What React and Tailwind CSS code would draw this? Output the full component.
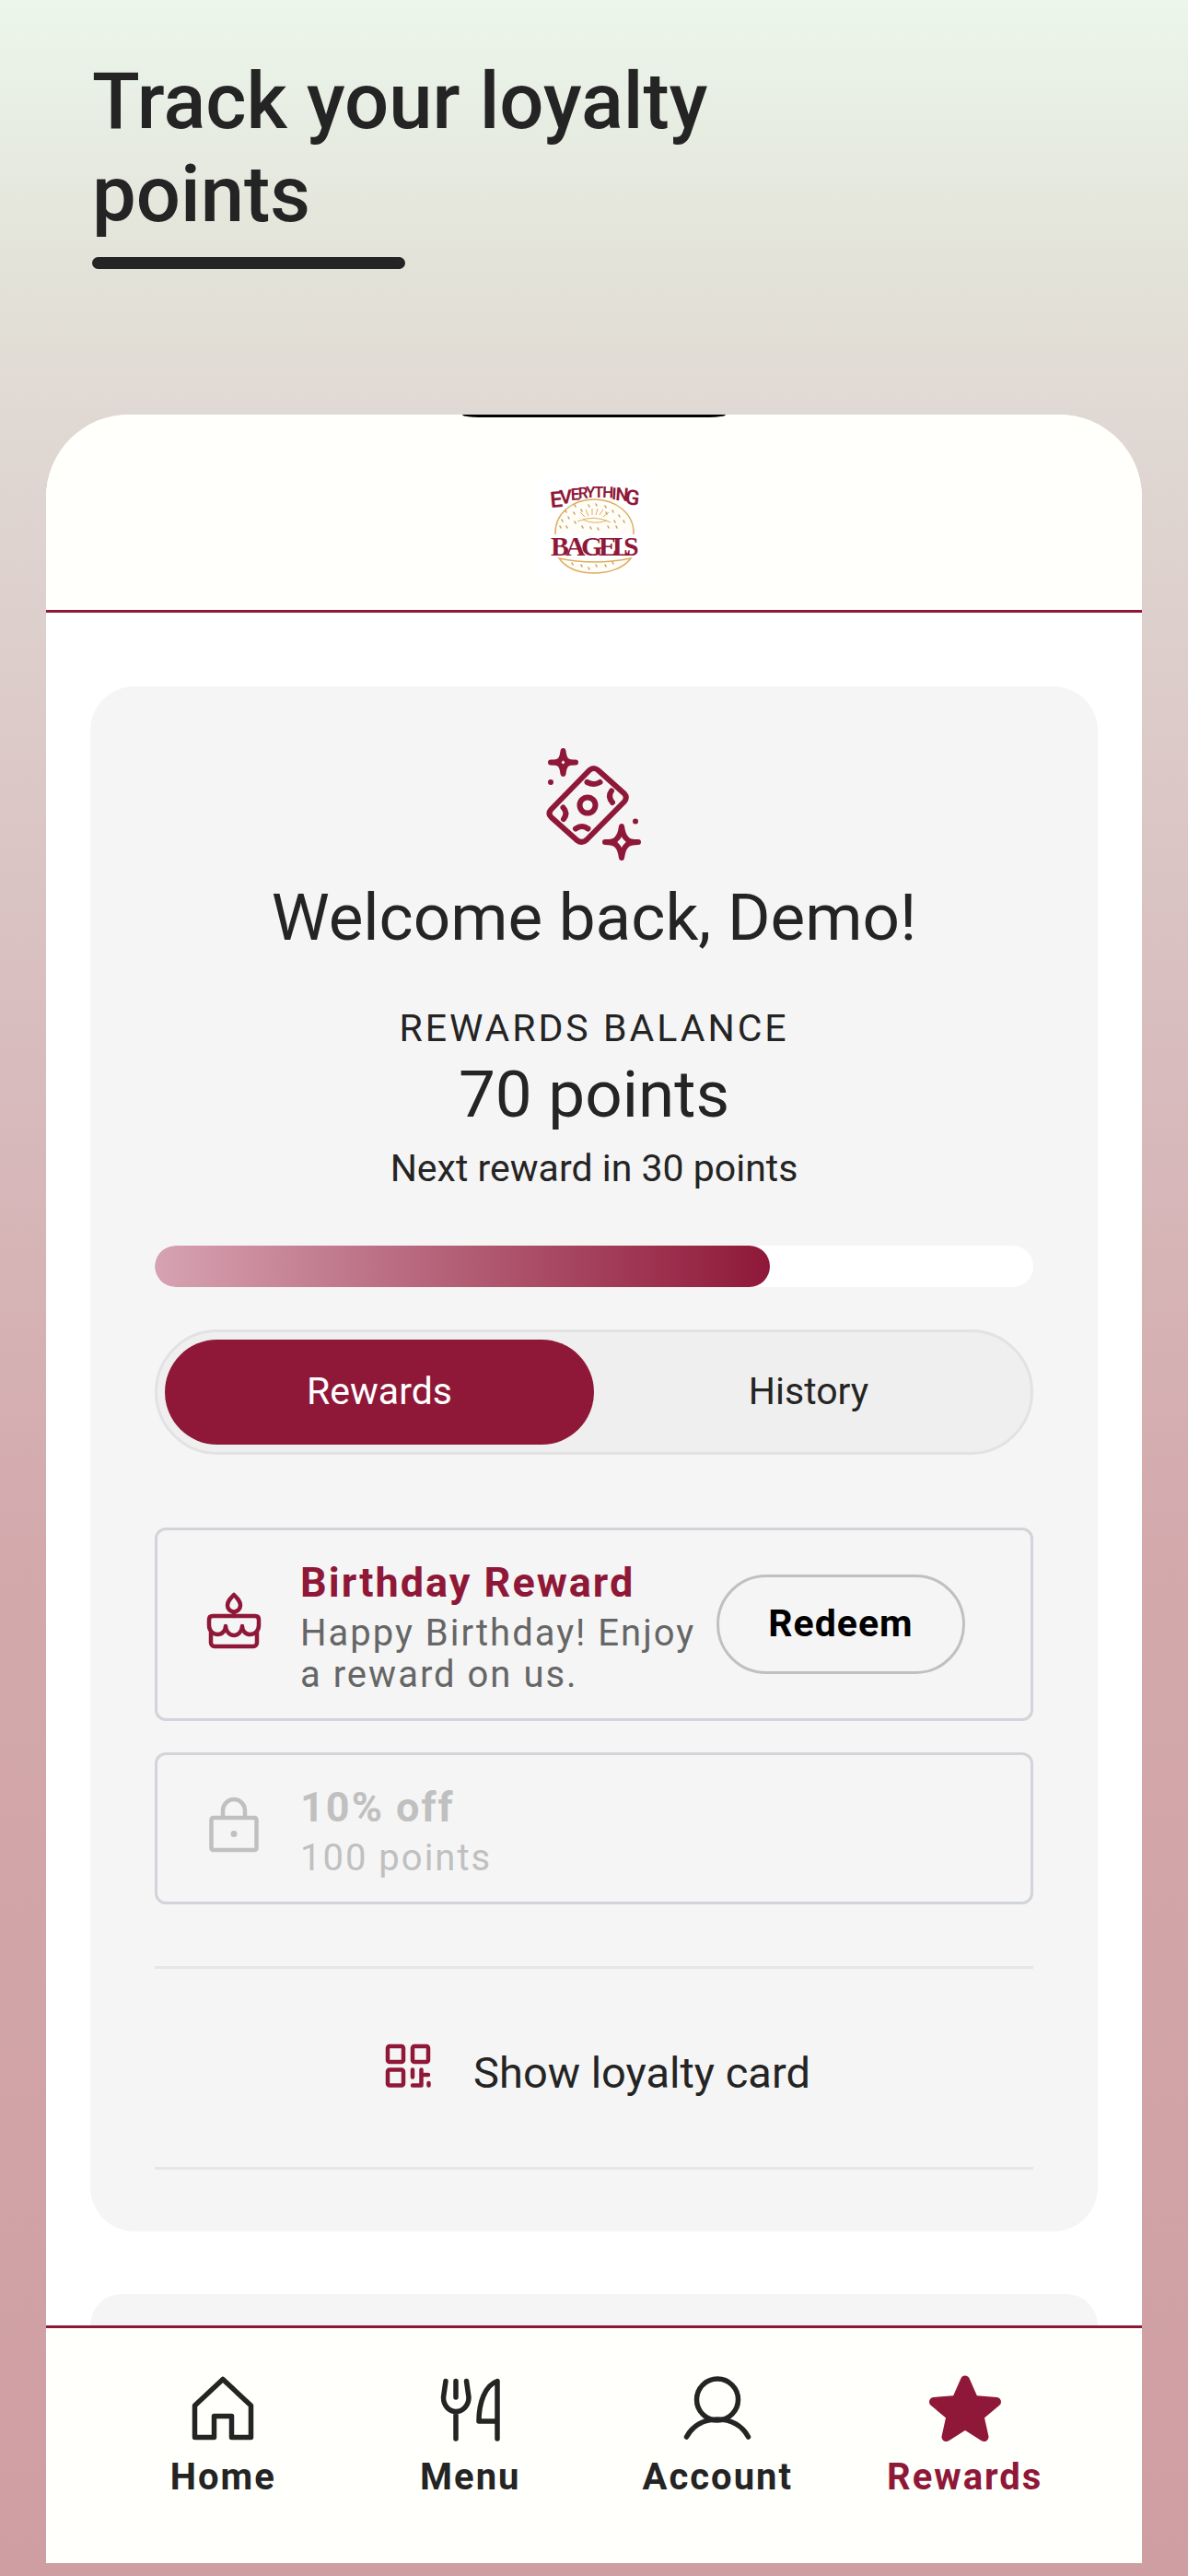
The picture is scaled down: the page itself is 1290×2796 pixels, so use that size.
import { useState } from 'react'

const NAV_ITEMS = [
  { key: 'home', label: 'Home', Icon: HomeIcon },
  { key: 'menu', label: 'Menu', Icon: MenuIcon },
  { key: 'account', label: 'Account', Icon: AccountIcon },
  { key: 'rewards', label: 'Rewards', Icon: StarIcon },
]

const REWARDS = [
  { key: 'birthday', title: 'Birthday Reward', text: 'Happy Birthday! Enjoy a reward on us.', Icon: CakeIcon, redeemable: true },
  { key: 'ten', title: '10% off', text: '100 points', Icon: LockIcon, redeemable: false },
]

// ─── Icons ───────────────────────────────────────────────────────────────────

function HomeIcon() {
  return (
    <svg width="80" height="80" viewBox="0 0 80 80" fill="none" stroke="currentColor" strokeWidth="5.500" strokeLinecap="round" strokeLinejoin="round">
      <path d="M40 9.500 9.500 38v34.500h21V49.500h19v23h21V38z" />
    </svg>
  )
}

function MenuIcon() {
  return (
    <svg width="80" height="80" viewBox="0 0 80 80" fill="none" stroke="currentColor" strokeWidth="5.500" strokeLinecap="round" strokeLinejoin="round">
      <path d="M13 11.500 10.500 29c0 9 6 15.500 13.500 15.500S38 38 38 29l-2.500-17.500M24 11.500V29M24 45v29M69 74V11.500C56 16 49 34 49 55h20" />
    </svg>
  )
}

function AccountIcon() {
  return (
    <svg width="80" height="80" viewBox="0 0 80 80" fill="none" stroke="currentColor" strokeWidth="5.500" strokeLinecap="round" strokeLinejoin="round">
      <circle cx="40" cy="31.500" r="22.500" />
      <path d="M6.500 72C13 60 25 53 40 53s27 7 33.500 19" />
    </svg>
  )
}

function StarIcon() {
  return (
    <svg width="80" height="80" viewBox="0 0 80 80" fill="currentColor" stroke="currentColor" strokeWidth="10" strokeLinejoin="round">
      <path d="M40 10.500 49.500 32 74 34 55.500 49.500 60.500 72 40 59 19.500 72 24.500 49.500 6 34 30.500 32z" />
    </svg>
  )
}

function CakeIcon() {
  return (
    <svg width="60" height="70" viewBox="0 0 60 70" fill="none" stroke="currentColor" strokeWidth="4.500" strokeLinecap="round" strokeLinejoin="round">
      <path d="M30 3c-4 4-7 7-7 11.500a7 7 0 0 0 14 0C37 10 34 7 30 3zM30 22v4" />
      <path d="M7 26h46c2.500 0 4 1.500 4 4v6c0 6-4 10-9.500 10-5 0-8.500-4-8.500-9 0 5-4 10-9 10s-9-5-9-10c0 5-4 9-8.500 9C7 46 3 42 3 36v-6c0-2.500 1.500-4 4-4zM5 44v11c0 2 1.500 4 4 4h42c2.500 0 4-2 4-4V44" />
    </svg>
  )
}

function LockIcon() {
  return (
    <svg width="60" height="70" viewBox="0 0 60 70" fill="none" stroke="currentColor" strokeWidth="4.500">
      <rect x="5.500" y="23" width="49" height="35" rx="2" />
      <path d="M18 23v-7.500a12 12.500 0 0 1 24 0v7.500" />
      <circle cx="30" cy="40.500" r="3.500" fill="currentColor" stroke="none" />
    </svg>
  )
}

function QrIcon() {
  return (
    <svg className="text-[#8f1838]" width="50" height="48" viewBox="0 0 50 48" fill="none" stroke="currentColor" strokeWidth="4.500" strokeLinecap="round" strokeLinejoin="round">
      <rect x="3" y="3" width="17" height="17" rx="2" />
      <rect x="30" y="3" width="17" height="17" rx="2" />
      <rect x="3" y="28.500" width="17" height="17" rx="2" />
      <path d="M30 28.500v8M30 45.500h9.500v-17M39.500 34H47M47.500 43v2.500" />
    </svg>
  )
}

function CashIcon() {
  return (
    <svg width="108" height="126" viewBox="0 0 108 126" fill="none" stroke="#8f1838" strokeWidth="6" strokeLinecap="round" strokeLinejoin="round">
      <path d="M49 26 7.500 68.500q-4 4.500 0 8.500l28 25q5.500 4 10.500-.500L87 60q3.500-4.500 0-8.500L58.500 26q-5-4-9.500 0z" />
      <circle cx="47" cy="64" r="8.500" />
      <path d="M46.500 39q7.500 4 14 0M73 48.500q-4.500 6 1 12.500M34 89.500q7-5 13.500 0M20.500 66.500q5.500 6 .500 12.500" />
      <path d="M20.500 5q1 8 3.500 10 2 2.500 10 2.500-8 0-10 2.500-2.500 2-3.500 10-1-8-3.500-10-2-2.500-10-2.500 8 0 10-2.500 2.500-2 3.500-10z" />
      <path d="M84 87q1.500 10 5 13 2.500 4 13 4-10.500 0-13 4-3.500 3-5 13-1.500-10-5-13-2.500-4-13-4 10.500 0 13-4 3.500-3 5-13z" />
      <circle cx="7" cy="39" r="3" fill="#8f1838" stroke="none" />
      <circle cx="99" cy="81.500" r="3" fill="#8f1838" stroke="none" />
    </svg>
  )
}

// ─── Logo ────────────────────────────────────────────────────────────────────

// letter, x, baseline, size, tilt
const TOP_LETTERS = [
  ['E', 15, 37, 24, -5],
  ['V', 25, 33, 21, -4],
  ['E', 37, 29, 18, -3],
  ['R', 45, 27, 17, -2],
  ['Y', 53, 26, 17, 0],
  ['T', 62, 26, 17, 0],
  ['H', 71, 26, 17, 2],
  ['I', 81, 28, 18, 3],
  ['N', 85, 29, 20, 4],
  ['G', 95, 33, 23, 7],
]

const SEEDS = [
  [31, 40], [41, 34], [48, 39], [56, 34], [64, 33], [74, 35], [82, 40], [89, 45], [94, 51],
  [34, 47], [27, 50], [32, 57], [25, 57], [41, 52], [49, 57], [58, 58], [66, 59], [77, 57],
  [84, 51], [75, 42], [86, 57], [40, 42], [38, 97], [48, 99], [56, 102], [64, 99], [74, 99], [82, 96],
]

function Logo() {
  return (
    <svg width="124" height="116" viewBox="0 0 124 116" role="img" aria-label="Everything Bagels">
      <rect width="124" height="116" fill="#ffffff" />
      <path d="M20 66c-1-22 18-38 42-38s44 16 43 38" fill="#fffdf8" stroke="#dfae5f" strokeWidth="1.500" />
      <path d="M24 92c8 11 22 16 38 16s32-5 40-16q-40 8-78 0z" fill="#fffdf8" stroke="#dfae5f" strokeWidth="1.500" />
      <path d="M44 52q18-8 36 1M50 50q12 6 26 1M52 47l-5-5M56 46l-3-7M60 45v-7M64 45l2-7M68 45l4-6M72 47l6-5" fill="none" stroke="#dfae5f" strokeWidth="1" />
      {SEEDS.map(([x, y]) => (
        <path key={`${x}-${y}`} d={`M${x} ${y}l1 2`} stroke="#c9a25a" strokeWidth="1.500" strokeLinecap="round" />
      ))}
      <g fill="#8f1838" fontFamily="Roboto, sans-serif" fontWeight="600">
        {TOP_LETTERS.map(([ch, x, y, size, turn], i) => (
          <text key={i} x={x} y={y} fontSize={size} transform={`rotate(${turn} ${x} ${y})`}>{ch}</text>
        ))}
      </g>
      <text
        x="15 31 48 67 82 94"
        y="89"
        fill="#8f1838"
        fontFamily="Liberation Serif, serif"
        fontWeight="700"
        fontSize="30"
      >
        BAGELS
      </text>
    </svg>
  )
}

// ─── Reward row ──────────────────────────────────────────────────────────────

function RewardRow({ title, text, Icon, redeemable }) {
  return (
    <li
      className={`flex items-center gap-4 rounded-xl border-3 border-[#d1d4d8] py-[25px] pr-[71px] pl-[53px] ${
        redeemable ? 'text-[#8f1838]' : 'text-[#c0c0c0]'
      }`}
    >
      <div className="w-[86px] shrink-0"><Icon /></div>
      <div className="min-w-0 flex-1">
        <h3 className="text-[45px] leading-[64px] font-bold tracking-[2px]">{title}</h3>
        <p className={`text-[40px] leading-[45px] tracking-[2px] ${redeemable ? 'text-[#666666]' : ''}`}>{text}</p>
      </div>
      {redeemable && (
        <button className="h-[108px] w-[270px] shrink-0 rounded-full border-3 border-[#c0c0c0] text-[41px] font-bold tracking-[1px] text-black">
          Redeem
        </button>
      )}
    </li>
  )
}

// ─── Main component ──────────────────────────────────────────────────────────

export default function App() {
  const [tab, setTab] = useState('rewards')
  const points = 70
  const goal = 100

  return (
    <div className="flex min-h-screen flex-col bg-linear-[to_bottom,#ecf6eb_0%,#e3e3d9_10%,#e0d9d3_16%,#d9bfc0_38%,#d3a9ac_60%,#cf9ea2_100%] px-[50px] pb-[14px] font-[Roboto,sans-serif] text-[#242424]">
      <div className="h-[450px] px-[50px] pt-[60px]">
        <h1 className="max-w-[800px] text-[85px] leading-[101px] font-medium">Track your loyalty points</h1>
        <div className="mt-[17px] h-[13px] w-[340px] rounded-full bg-[#242424]" />
      </div>

      <div className="flex flex-1 flex-col overflow-hidden rounded-t-[90px] bg-white">
        <header className="flex h-[215px] flex-col items-center border-b-3 border-[#8f1838] bg-[#fffffb]">
          <div className="h-[3px] w-[286px] rounded-b-[18px_3px] bg-black" />
          <div className="mt-[61px]"><Logo /></div>
        </header>

        <main className="flex flex-1 flex-col gap-[68px] px-12 pt-20">
          <section className="flex flex-col items-center rounded-[48px] bg-[#f5f5f5] px-[70px] pt-[65px] pb-[67px]">
            <CashIcon />
            <h2 className="mt-5 text-[71px] leading-[80px]">Welcome back, Demo!</h2>
            <p className="mt-14 text-[41px] leading-[48px] tracking-[3px]">REWARDS BALANCE</p>
            <p className="mt-2 text-[71px] leading-[80px]">{points} points</p>
            <p className="mt-4 text-[41px] leading-[48px]">Next reward in {goal - points} points</p>

            <div className="mt-[60px] h-[45px] w-full overflow-hidden rounded-full bg-white">
              <div
                className="h-full rounded-full bg-linear-to-r/srgb from-[#d6a3b2] to-[#8f1838]"
                style={{ width: `${(points / goal) * 100}%` }}
              />
            </div>

            <div className="mt-[46px] flex h-[136px] w-full rounded-full border-3 border-[#e2e2e2] bg-[#efefef] p-2">
              <button
                onClick={() => setTab('rewards')}
                className={`flex-1 rounded-full text-[41px] ${tab === 'rewards' ? 'bg-[#8f1838] text-white' : ''}`}
              >
                Rewards
              </button>
              <button
                onClick={() => setTab('history')}
                className={`flex-1 rounded-full text-[41px] ${tab === 'history' ? 'bg-[#8f1838] text-white' : ''}`}
              >
                History
              </button>
            </div>

            <ul className="mt-[79px] flex w-full flex-col gap-[34px]">
              {REWARDS.map((r) => (
                <RewardRow key={r.key} title={r.title} text={r.text} Icon={r.Icon} redeemable={r.redeemable} />
              ))}
            </ul>

            <button className="mt-[67px] flex h-[221px] w-full items-baseline justify-center gap-[46px] border-y-3 border-[#e6e6e6] pt-[81px] pl-2 text-[47px] leading-[56px]">
              <QrIcon />
              Show loyalty card
            </button>
          </section>

          <section className="flex-1 rounded-t-[48px] bg-[#f5f5f5]" />
        </main>

        <nav className="flex h-[258px] border-t-3 border-[#8f1838] bg-[#fffffb] px-[58px] pt-[46px]">
          {NAV_ITEMS.map(({ key, label, Icon }) => (
            <a
              key={key}
              href={`#${key}`}
              className={`flex flex-1 flex-col items-center gap-3 text-[40px] leading-[48px] font-bold tracking-[2px] ${
                key === 'rewards' ? 'text-[#8f1838]' : ''
              }`}
            >
              <Icon />
              {label}
            </a>
          ))}
        </nav>
      </div>
    </div>
  )
}
